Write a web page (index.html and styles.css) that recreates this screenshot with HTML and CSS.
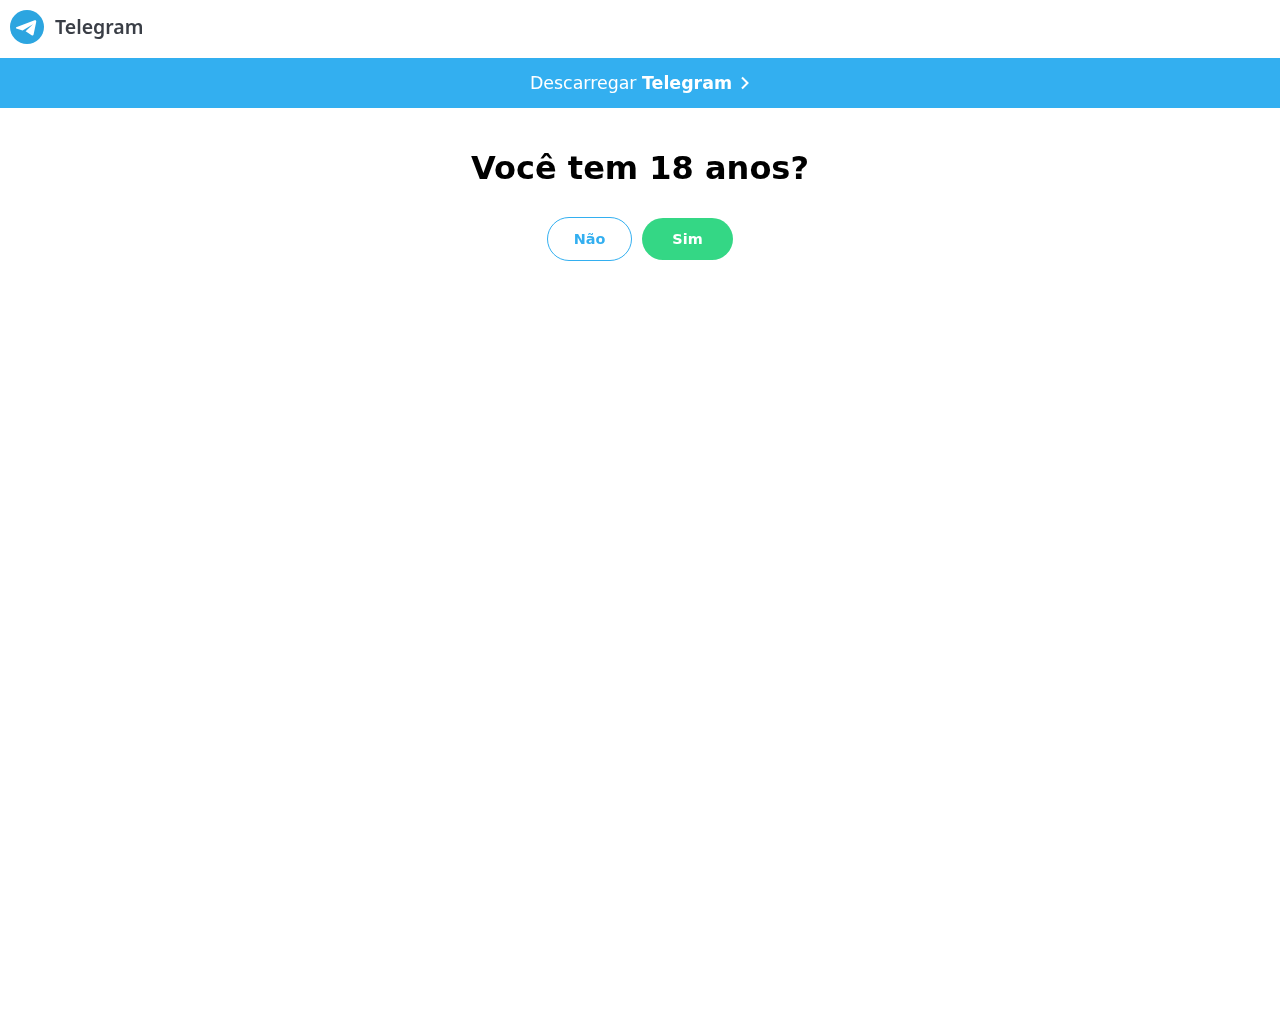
FILE: index.html
```html
<!DOCTYPE html>
<html lang="pt">
<head>
  <meta charset="UTF-8">
  <meta name="viewport" content="width=device-width, initial-scale=1.0">
  <title>Telegram</title>
  <link rel="stylesheet" href="styles.css">
</head>
<body>
  <div class="page">
    <header class="topbar">
      <a class="logo" href="#">
        <svg class="logo-icon" viewBox="0 0 34 34" width="34" height="34">
          <circle cx="17" cy="17" r="17" fill="#2ca5e0"/>
          <path d="M6.2 17.2 24.6 10.3c1.1-.4 1.9.3 1.6 1.6L23.6 24.4c-.3 1.2-1 1.4-2 .8L15.6 21.2 23 14.2 12.6 20.4 7 18.8c-1.2-.4-1.2-1.1-.8-1.6z" fill="#fff"/>
        </svg>
        <span class="logo-text">Telegram</span>
      </a>
    </header>
    <a class="download-bar" href="#">
      Descarregar&nbsp;<b>Telegram</b>
      <svg class="chevron" viewBox="0 0 10 14" width="10" height="14">
        <path d="M2 1.5 7.5 7 2 12.5" fill="none" stroke="#fff" stroke-width="2"/>
      </svg>
    </a>
    <main class="age-check">
      <h1>Você tem 18 anos?</h1>
      <div class="buttons">
        <button class="btn btn-no">Não</button>
        <button class="btn btn-yes">Sim</button>
      </div>
    </main>
  </div>
</body>
</html>
```
FILE: styles.css
```css
body {
  margin: 0;
  font-family: "DejaVu Sans", sans-serif;
  background: #fff;
  color: #000;
}

.page {
  will-change: transform;
}

.topbar {
  height: 58px;
  display: flex;
  align-items: center;
  padding-left: 10px;
}

.logo {
  display: flex;
  align-items: center;
  gap: 11px;
  text-decoration: none;
  margin-top: -4px;
}

.logo-text {
  font-family: "Noto Sans", sans-serif;
  font-size: 19.5px;
  font-weight: 600;
  color: #3a3e46;
  margin-bottom: 2px;
}

.download-bar {
  height: 50px;
  background: #33aff0;
  color: #fff;
  font-size: 17.4px;
  display: flex;
  align-items: center;
  justify-content: center;
  text-decoration: none;
}

.chevron {
  margin-left: 8px;
}

.age-check {
  text-align: center;
}

h1 {
  font-size: 32px;
  font-weight: bold;
  line-height: 40px;
  margin: 40px 0 29px;
}

.buttons {
  display: flex;
  justify-content: center;
  gap: 10px;
}

.btn {
  font-family: inherit;
  font-size: 14.4px;
  font-weight: bold;
  height: 44px;
  border-radius: 22px;
  cursor: pointer;
}

.btn-no {
  width: 85px;
  background: #fff;
  color: #33aff0;
  border: 1px solid #33aff0;
}

.btn-yes {
  width: 91px;
  height: 42px;
  margin-top: 1px;
  background: #34d785;
  color: #fff;
  border: none;
}
```
